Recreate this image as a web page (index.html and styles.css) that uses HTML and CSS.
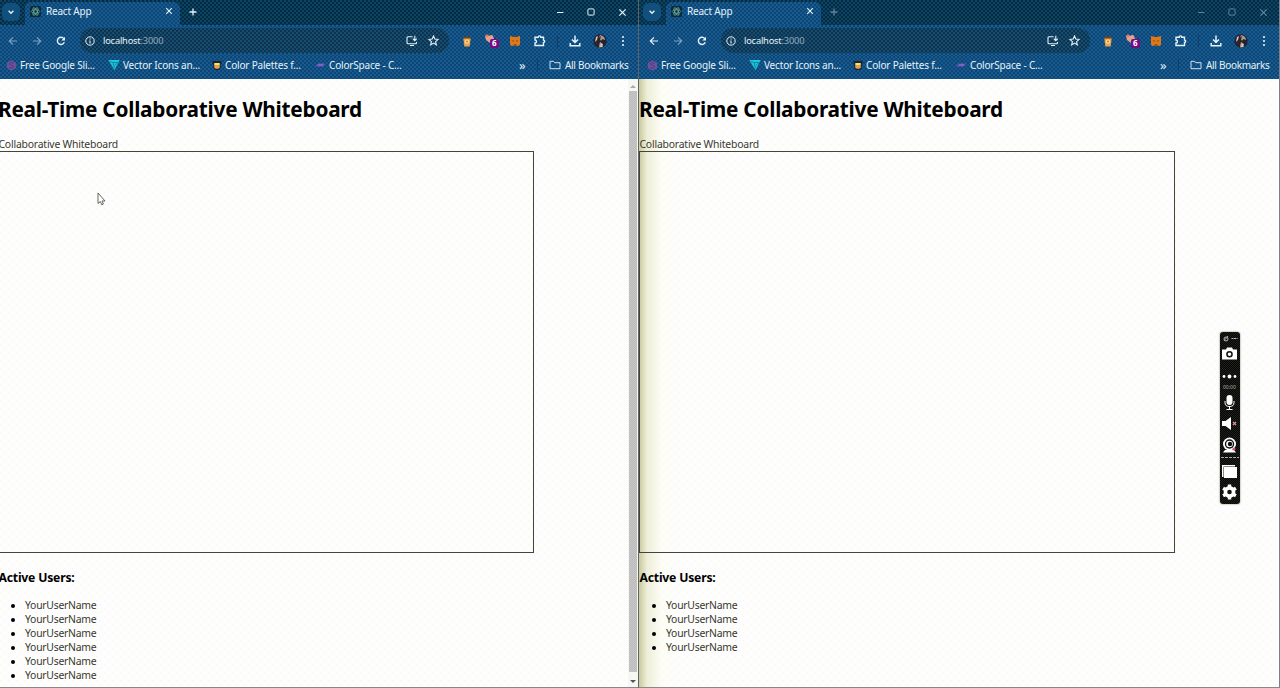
FILE: index.html
```
<!DOCTYPE html>
<html lang="en">
<head>
<meta charset="utf-8">
<title>React App</title>
<link rel="stylesheet" href="styles.css">
</head>
<body>
<svg class="defs" aria-hidden="true">
  <symbol id="chev" viewBox="0 0 8 8"><path d="M1.6 2.8 4 5.2l2.4-2.4" fill="none" stroke="currentColor" stroke-width="1.4"/></symbol>
  <symbol id="react" viewBox="0 0 11 11"><rect width="11" height="11" rx="1.5" fill="#0b2b3c"/><g fill="none" stroke="#6fb5a5" stroke-width=".7"><ellipse cx="5.5" cy="5.5" rx="4.3" ry="1.7"/><ellipse cx="5.5" cy="5.5" rx="4.3" ry="1.7" transform="rotate(60 5.5 5.5)"/><ellipse cx="5.5" cy="5.5" rx="4.3" ry="1.7" transform="rotate(120 5.5 5.5)"/></g></symbol>
  <symbol id="x" viewBox="0 0 8 8"><path d="m1.2 1.2 5.6 5.6m0-5.6L1.2 6.8" fill="none" stroke="currentColor" stroke-width="1.1"/></symbol>
  <symbol id="plus" viewBox="0 0 8 8"><path d="M4 .5v7M.5 4h7" fill="none" stroke="currentColor" stroke-width="1.3"/></symbol>
  <symbol id="min" viewBox="0 0 8 8"><path d="M1 4.5h6.4" stroke="currentColor"/></symbol>
  <symbol id="max" viewBox="0 0 8 8"><rect x=".9" y=".9" width="6.2" height="6.2" rx="1" fill="none" stroke="currentColor"/></symbol>
  <symbol id="back" viewBox="0 0 10 10"><path d="M9 5H1.5M5 1.3 1.3 5 5 8.7" fill="none" stroke="currentColor" stroke-width="1.2"/></symbol>
  <symbol id="reload" viewBox="0 0 10 10"><path d="M8.3 6.3A3.6 3.6 0 1 1 7.8 2.6" fill="none" stroke="currentColor" stroke-width="1.4"/><path d="M9 .7v3.7H5.3z" fill="currentColor"/></symbol>
  <symbol id="info" viewBox="0 0 10 10"><circle cx="5" cy="5" r="4.2" fill="none" stroke="currentColor"/><path d="M5 4.4v3M5 2.4v1.1" stroke="currentColor" stroke-width="1.1"/></symbol>
  <symbol id="install" viewBox="0 0 12 12"><path d="M6.5 1.8H2q-1 0-1 1v5q0 1 1 1h7.500q1 0 1-1V7M4 10.500h4M8.800 .8v4.500M6.800 3.600l2 2 2-2" fill="none" stroke="currentColor" stroke-width="1.100"/></symbol>
  <symbol id="star" viewBox="0 0 10 10"><path d="m5 .9 1.200 2.800 3 .3-2.300 2 .7 3L5 7.400 2.400 9l.7-3-2.300-2 3-.3z" fill="none" stroke="currentColor"/></symbol>
  <symbol id="cup" viewBox="0 0 10 12"><path d="M1.300 1.500h7.400v2H1.300z" fill="#714220"/><path d="m1.300 3.500 1 8h5.400l1-8z" fill="#e8a34c"/><circle cx="5" cy="6.600" r="2.200" fill="#ffe08e"/><circle cx="5" cy="6.600" r="1" fill="#c37728"/></symbol>
  <symbol id="bird" viewBox="0 0 16 16"><path d="M1 3q2-3 4 0 3-2 4 0l1 3-4 4-4-3z" fill="#e5a091"/><path d="m1 3 2-2 1 3z" fill="#d66e39"/><rect x="6" y="6" width="9" height="9" rx="2" fill="#790a80"/></symbol>
  <symbol id="fox" viewBox="0 0 12 12"><path d="m1 1 4 1h2l4-1v8l-1 2-3-.5H5L2 11 1 9z" fill="#df7817"/><path d="M2.500 5.500H5l-.5 1.500zM9.500 5.500H7l.5 1.500zM4.500 9h3l-.5 1H5z" fill="#8d4b20"/></symbol>
  <symbol id="ext" viewBox="0 0 12 12"><path d="M1 2.200h3.200a1.300 1.300 0 0 1 2.600 0H9.500v2.900a1.200 1.200 0 0 1 0 2.400v3H1V8a1.500 1.500 0 0 0 0-3z" fill="none" stroke="currentColor" stroke-width="1.400"/></symbol>
  <symbol id="down" viewBox="0 0 12 12"><path d="M6 .5v7M3 4.500l3 3 3-3M1.200 8v2.800h9.600V8" fill="none" stroke="currentColor" stroke-width="1.500"/></symbol>
  <symbol id="avatar" viewBox="0 0 14 14"><circle cx="7" cy="7" r="6.700" fill="#202431"/><path d="M7 1q5 1 5 5l-3-1-1 4 2 4-4 .5L6.500 8 3 10l2-4z" fill="#ae9790"/><path d="M8 2 7 6l3 1-1 2-2-1-2 5-2-2 1-6z" fill="#302127"/><path d="m3 3 2-1-1 4-2 2zM8 9l2 1-1 3H7z" fill="#dcc5bd"/></symbol>
  <symbol id="menu" viewBox="0 0 4 12"><g fill="currentColor"><circle cx="2" cy="2" r="1.100"/><circle cx="2" cy="6" r="1.100"/><circle cx="2" cy="10" r="1.100"/></g></symbol>
  <symbol id="slides" viewBox="0 0 11 11"><path d="M5.500.3 10.200 3v5L5.500 10.700.8 8V3z" fill="#72519b"/><path d="M8 3.300 5 2.500 3 4l5 2.500L6 8.300 3 7.500" fill="none" stroke="#384683"/></symbol>
  <symbol id="vec" viewBox="0 0 12 11"><path d="M.3.5h11.400L6.500 10.700z" fill="#19c9d7"/><path d="m2 2 3 1 1.500 6M5 3h5L6.500 6" fill="none" stroke="#126b9a" stroke-width=".7"/></symbol>
  <symbol id="pal" viewBox="0 0 10 11"><path d="M0 1h10v3l-1 1v4l-2 2H3L1 9V5L0 4z" fill="#18243a"/><path d="M2 3.300h6v3H2z" fill="#ffe35a"/><path d="M2 6.300h6V8L6.500 9.500h-3L2 8z" fill="#f0a04c"/></symbol>
  <symbol id="space" viewBox="0 0 11 8"><path d="M.5 4.500 3 2.500h7.500L8 5.500H.5z" fill="#6252b4"/><path d="M3 4h5" stroke="#9c74cc"/></symbol>
  <symbol id="folder" viewBox="0 0 12 10"><path d="M1 8.700V1.300h3.500l1.200 1.400H11v6z" fill="none" stroke="currentColor" stroke-width=".9"/></symbol>
</svg>

<main class="desktop">
  <section class="window window-left">
    <header class="chrome">
      <div class="tabs">
        <span class="search"><svg class="i8"><use href="#chev"/></svg></span>
        <div class="tab"><svg class="i11"><use href="#react"/></svg><span class="tab-title">React App</span><svg class="i8"><use href="#x"/></svg></div>
        <svg class="i8 newtab"><use href="#plus"/></svg>
        <div class="controls"><svg class="i8"><use href="#min"/></svg><svg class="i8"><use href="#max"/></svg><svg class="i9"><use href="#x"/></svg></div>
      </div>
      <div class="toolbar">
        <svg class="i10 dim"><use href="#back"/></svg><svg class="i10 dim flip"><use href="#back"/></svg><svg class="i10"><use href="#reload"/></svg>
        <div class="address"><svg class="i10"><use href="#info"/></svg><span class="url">localhost<span class="port">:3000</span></span><svg class="i12"><use href="#install"/></svg><svg class="i11 fav"><use href="#star"/></svg></div>
        <div class="actions"><svg class="cup"><use href="#cup"/></svg><span class="bird"><svg class="i16"><use href="#bird"/></svg><b>6</b></span><svg class="i12 fox"><use href="#fox"/></svg><svg class="i12 ext"><use href="#ext"/></svg><i class="sep"></i><svg class="i12"><use href="#down"/></svg><svg class="i14"><use href="#avatar"/></svg><svg class="dots"><use href="#menu"/></svg></div>
      </div>
      <nav class="bookmarks">
        <svg class="i11"><use href="#slides"/></svg><span class="bm b1">Free Google Sli...</span>
        <svg class="i12"><use href="#vec"/></svg><span class="bm b2">Vector Icons an...</span>
        <svg class="i10"><use href="#pal"/></svg><span class="bm b3">Color Palettes f...</span>
        <svg class="i11 space"><use href="#space"/></svg><span class="bm b4">ColorSpace - C...</span>
        <span class="more">»</span><i class="sep"></i><svg class="i12 folder"><use href="#folder"/></svg><span class="all">All Bookmarks</span>
      </nav>
    </header>
    <div class="view">
      <article class="page">
        <h1>Real-Time Collaborative Whiteboard</h1>
        <p class="label">Collaborative Whiteboard</p>
        <div class="board"></div>
        <h2>Active Users:</h2>
        <ul><li>YourUserName</li><li>YourUserName</li><li>YourUserName</li><li>YourUserName</li><li>YourUserName</li><li>YourUserName</li></ul>
      </article>
      <div class="scrollbar"><i class="up"></i><i class="thumb"></i><i class="arrow"></i></div>
    </div>
    <svg class="cursor" viewBox="0 0 9 14"><path d="M1 1v10.500l2.300-2 1.500 3.300 1.600-.8L5 9h3z" fill="#fff" stroke="#55554a" stroke-width=".9"/></svg>
  </section>

  <section class="window window-right">
    <header class="chrome">
      <div class="tabs">
        <span class="search"><svg class="i8"><use href="#chev"/></svg></span>
        <div class="tab"><svg class="i11"><use href="#react"/></svg><span class="tab-title">React App</span><svg class="i8"><use href="#x"/></svg></div>
        <svg class="i8 newtab"><use href="#plus"/></svg>
        <div class="controls"><svg class="i8"><use href="#min"/></svg><svg class="i8"><use href="#max"/></svg><svg class="i9"><use href="#x"/></svg></div>
      </div>
      <div class="toolbar">
        <svg class="i10"><use href="#back"/></svg><svg class="i10 dim flip"><use href="#back"/></svg><svg class="i10"><use href="#reload"/></svg>
        <div class="address"><svg class="i10"><use href="#info"/></svg><span class="url">localhost<span class="port">:3000</span></span><svg class="i12"><use href="#install"/></svg><svg class="i11 fav"><use href="#star"/></svg></div>
        <div class="actions"><svg class="cup"><use href="#cup"/></svg><span class="bird"><svg class="i16"><use href="#bird"/></svg><b>6</b></span><svg class="i12 fox"><use href="#fox"/></svg><svg class="i12 ext"><use href="#ext"/></svg><i class="sep"></i><svg class="i12"><use href="#down"/></svg><svg class="i14"><use href="#avatar"/></svg><svg class="dots"><use href="#menu"/></svg></div>
      </div>
      <nav class="bookmarks">
        <svg class="i11"><use href="#slides"/></svg><span class="bm b1">Free Google Sli...</span>
        <svg class="i12"><use href="#vec"/></svg><span class="bm b2">Vector Icons an...</span>
        <svg class="i10"><use href="#pal"/></svg><span class="bm b3">Color Palettes f...</span>
        <svg class="i11 space"><use href="#space"/></svg><span class="bm b4">ColorSpace - C...</span>
        <span class="more">»</span><i class="sep"></i><svg class="i12 folder"><use href="#folder"/></svg><span class="all">All Bookmarks</span>
      </nav>
    </header>
    <div class="view">
      <article class="page">
        <h1>Real-Time Collaborative Whiteboard</h1>
        <p class="label">Collaborative Whiteboard</p>
        <div class="board"></div>
        <h2>Active Users:</h2>
        <ul><li>YourUserName</li><li>YourUserName</li><li>YourUserName</li><li>YourUserName</li></ul>
      </article>
    </div>
  </section>

  <aside class="recorder">
    <svg class="rec-art" viewBox="0 0 20 172" fill="#fff">
      <g fill="none" stroke="#bbb"><circle cx="6" cy="7" r="2"/><path d="m4 9 4-5M11.500 6.500h6" stroke-dasharray="2 .5"/></g>
      <path fill-rule="evenodd" d="M2 17.500h4l1-2h5l1 2h4v10H2zM9.500 19a3.300 3.300 0 1 0 0 6.600 3.300 3.300 0 0 0 0-6.600zm0 1.500a1.800 1.800 0 1 1 0 3.600 1.800 1.800 0 0 1 0-3.600z"/>
      <circle cx="4" cy="44.500" r="1.400"/><circle cx="9.500" cy="44.500" r="1.900"/><circle cx="15" cy="44.500" r="1.400"/>
      <rect x="6.500" y="63" width="6" height="10" rx="3"/><path d="M5 69v1.500q0 4 4.500 4t4.500-4V69M9.500 74v3M6.500 77.500h6" fill="none" stroke="#fff"/>
      <path d="M2 89h3.500l5.500-4v13l-5.500-4H2z"/><path d="m13 90 3 3m0-3-3 3" stroke="#d98b99" stroke-width="1.300"/>
      <circle cx="9.500" cy="112" r="6.500"/><circle cx="9.500" cy="112" r="4.700" fill="#111"/><circle cx="9.500" cy="112" r="3.300"/><circle cx="10" cy="112" r="2.200" fill="#111"/><path d="M5 118h9l2 2.500H3z"/><circle cx="14" cy="117" r="1.500" fill="#d05b72"/>
      <path d="M1 125.500h18" stroke="#aaa" stroke-dasharray="3 1"/>
      <path d="M2 133h13v1.500H3.500V145H2z"/><path d="M4 135h13v11H4z"/>
      <circle cx="9.500" cy="160" r="4.100" fill="none" stroke="#fff" stroke-width="3.600"/><path d="M9.500 152.600v3m0 8.800v3m-6.400-11.100 2.600 1.500m7.600 4.400 2.600 1.500m-12.800 0 2.600-1.500m7.600-4.400 2.600-1.500" stroke="#fff" stroke-width="3.400"/>
    </svg>
    <span class="time">00:00</span>
  </aside>
</main>
</body>
</html>
```
FILE: styles.css
```
* { box-sizing: border-box; }
body { margin: 0; font-family: "Noto Sans", "Open Sans", sans-serif; color: #38382e; }
svg { display: block; flex: none; }
.defs { position: absolute; width: 0; height: 0; }
.desktop { position: relative; display: flex; width: 1280px; height: 688px; overflow: hidden; background: #fdfdfd; }
.window { position: relative; display: flex; flex-direction: column; overflow: hidden; border-bottom: 1px solid #888; }
.window-left { width: 639px; border-right: 1px solid #626269; }
.window-right { width: 641px; border-right: 1px solid #79828c; }

.i8 { width: 8px; height: 8px; } .i9 { width: 9px; height: 9px; }
.i10 { width: 10px; height: 10px; } .i11 { width: 11px; height: 11px; }
.i12 { width: 12px; height: 12px; } .i14 { width: 14px; height: 14px; }
.i16 { width: 16px; height: 16px; }

.chrome { flex: none; width: 638px; height: 79px; color: #e4f2fa; }
.window-right .chrome { width: 640px; }
.window-right .tabs, .window-right .bookmarks { padding-left: 2px; }
.chrome, .toolbar, .tab { background: repeating-conic-gradient(#0a4678 0 25%, #1a5a8c 0 50%) 0 0 / 4px 4px; }
.tabs { display: flex; align-items: center; height: 25px; padding-bottom: 1px; background: repeating-conic-gradient(#042a48 0 25%, #0b4560 0 50%) 0 0 / 4px 4px; }
.search { display: flex; align-items: center; justify-content: center; width: 18px; height: 18px; margin-left: 2px; border-radius: 6px; background: #114f7c; }
.tab { display: flex; align-items: center; width: 155px; height: 23px; margin: 3px 0 0 5px; padding: 0 7px 5px 5px; border-radius: 6px 6px 0 0; }
.tab-title { flex: 1; margin-left: 5px; font-size: 10px; letter-spacing: -.2px; }
.newtab { margin-left: 9px; }
.controls { display: flex; align-items: center; gap: 23px; margin-left: auto; padding-right: 11px; }
.window-right .controls, .window-right .newtab { opacity: .4; }
.toolbar { display: flex; align-items: center; height: 31px; gap: 14px; padding-left: 8px; }
.window-right .toolbar { padding-left: 10px; }
.dim { opacity: .5; } .flip { transform: scaleX(-1); }
.address { display: flex; align-items: center; width: 369px; height: 25px; padding: 0 10px 0 5px; border-radius: 12px; background: repeating-conic-gradient(#0c3452 0 25%, #174c6c 0 50%) 0 0 / 4px 4px; }
.url { flex: 1; margin-left: 8px; font-size: 9.300px; letter-spacing: -.2px; }
.port { color: #91a9bd; }
.fav { margin-left: 10px; }
.actions { display: flex; align-items: center; margin-left: -1px; }
.cup { width: 10px; height: 12px; }
.bird { position: relative; margin-left: 12px; }
.bird b { position: absolute; left: 8px; top: 4px; font-size: 8px; line-height: 12px; color: #fff; }
.fox { margin-left: 9px; } .ext { margin-left: 13px; }
.sep { flex: none; width: 1px; height: 12px; background: #123c65; }
.actions .sep { margin: 0 11px; }
.actions .i14 { margin-left: 12px; }
.dots { width: 4px; height: 12px; margin-left: 14px; }
.bookmarks { display: flex; align-items: center; height: 20px; padding-bottom: 2px; font-size: 10px; letter-spacing: -.18px; white-space: nowrap; }
.bookmarks > .i11:first-child { margin-left: 6px; }
.bm { flex: none; margin-left: 3px; }
.b1 { width: 88px; } .b2 { width: 89px; } .b3 { width: 90px; } .b4 { width: 190px; }
.space { height: 8px; }
.more { width: 18px; font-size: 13px; line-height: 18px; }
.bookmarks .sep { margin-right: 11px; }
.all { margin-left: 4px; letter-spacing: -.3px; }

.view { position: relative; display: flex; flex: 1; min-height: 0; background-color: #fdfdff; background-image: conic-gradient(from 270deg at 1px 1px, #ffffa0 90deg, transparent 0), conic-gradient(from 270deg at 1px 1px, #ffffa0 90deg, transparent 0); background-size: 8px 8px; background-position: 0 1px, 4px 5px; }
.page { position: relative; flex: 1; margin-left: -1px; padding-top: 14px; }
.window-right .page { margin-left: 0; padding-left: 1px; }
.window-right .view::before { content: ""; position: absolute; inset: 0 auto 0 0; width: 40px; background: linear-gradient(90deg, #c9c99c, #e6e6c7aa 8px, #fafae444 22px, #fafae400 40px); }
h1 { margin: 0; font-size: 20.800px; line-height: 32px; letter-spacing: -.25px; font-weight: 700; color: #000; white-space: nowrap; text-indent: -1px; }
.label { margin: 12px 0 0; font-size: 10.400px; line-height: 14px; letter-spacing: -.2px; text-indent: -.5px; }
.board { width: 535px; height: 402px; border: 1px solid #44443a; }
.window-right .board { width: 536px; margin-left: -1px; }
h2 { margin: 15px 0 0; font-size: 12.200px; line-height: 20px; letter-spacing: -.2px; color: #000; text-indent: -.5px; }
ul { margin: 10px 0 0; padding-left: 26px; font-size: 10.400px; line-height: 14px; letter-spacing: -.25px; }
li { height: 14px; }
li::marker { color: #000; }
.scrollbar { display: flex; flex-direction: column; align-items: center; width: 10px; background: #f6f6f2; }
.thumb { flex: 1; width: 8px; background: repeating-conic-gradient(#b9b9be 0 25%, #cacac5 0 50%) 0 0 / 2px 2px; }
.up, .arrow { width: 0; height: 0; border: 3px solid transparent; }
.up { margin: 2px 0 3px; border-bottom: 3px solid #aaa; border-top: 0; height: 7px; }
.arrow { margin: 8px 0 4px; border-top: 3px solid #555; border-bottom: 0; }
.cursor { position: absolute; left: 97px; top: 192px; width: 9px; height: 14px; }
.recorder { position: absolute; left: 1220px; top: 332px; width: 20px; height: 172px; border-radius: 3px; background: repeating-conic-gradient(#050505 0 25%, #20201b 0 50%) 0 0 / 2px 2px; box-shadow: 0 0 2px #777755; }
.rec-art { width: 20px; height: 172px; }
.time { position: absolute; left: 3px; top: 51px; font-size: 5px; line-height: 8px; color: #aaa; }
```
